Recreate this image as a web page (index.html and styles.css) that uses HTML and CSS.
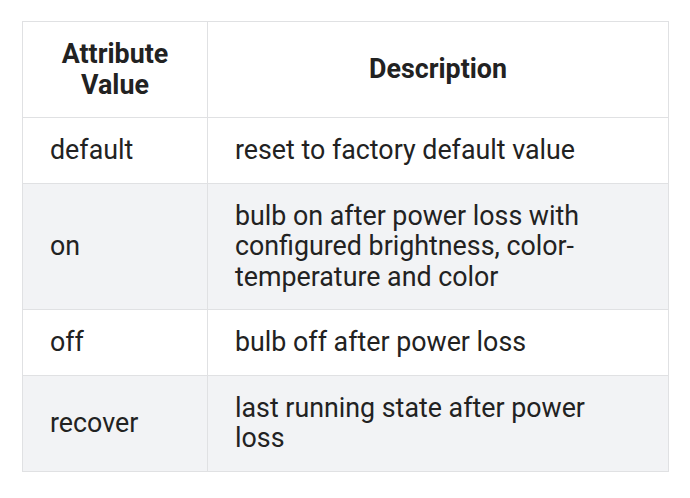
FILE: index.html
```html
<!DOCTYPE html>
<html>
<head>
<meta charset="utf-8">
<link rel="stylesheet" href="styles.css">
</head>
<body>
<table class="attr-table">
  <thead>
    <tr>
      <th class="col-value">Attribute<br>Value</th>
      <th>Description</th>
    </tr>
  </thead>
  <tbody>
    <tr><td>default</td><td>reset to factory default value</td></tr>
    <tr class="alt"><td>on</td><td>bulb on after power loss with configured brightness, color-temperature and color</td></tr>
    <tr><td>off</td><td>bulb off after power loss</td></tr>
    <tr class="alt"><td>recover</td><td>last running state after power loss</td></tr>
  </tbody>
</table>
</body>
</html>
```
FILE: styles.css
```css
html, body {
  margin: 0;
  background: #fff;
}
body {
  padding: 21px 22px;
  font-family: Roboto, "Liberation Sans", sans-serif;
  color: #222;
}
.attr-table {
  border-collapse: collapse;
  width: 647px;
  font-size: 26.8px;
  line-height: 30.5px;
}
.attr-table th,
.attr-table td {
  border: 1px solid #e0e1e3;
  padding: 17px 40px 17px 27px;
  text-align: left;
  vertical-align: middle;
}
.attr-table th {
  text-align: center;
  font-weight: 700;
  padding: 17px 27px;
}
.attr-table .col-value {
  width: 130px;
}
.attr-table tr.alt td {
  background: #f2f3f5;
}
```
